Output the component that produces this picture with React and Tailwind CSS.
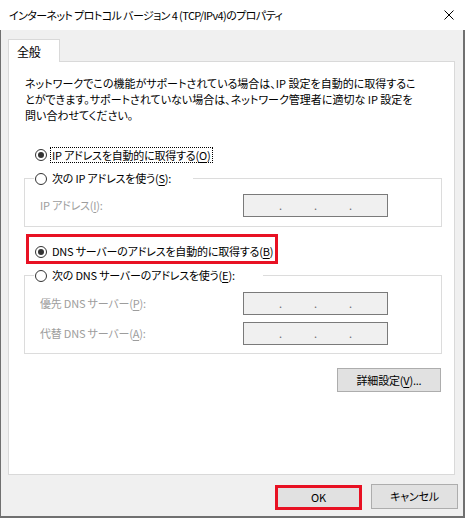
import React from 'react';

const Radio = ({ checked }) => (
  <span className="w-[12px] h-[12px] shrink-0 rounded-full border border-[#333333] bg-white flex items-center justify-center">
    {checked && <span className="w-[6px] h-[6px] rounded-full bg-[#333333]"></span>}
  </span>
);

const IpBox = () => (
  <div className="w-[145px] h-[23px] border border-[#7a7a7a] bg-[#f0f0f0] flex justify-center items-center text-[#6d6d6d] leading-none">
    <span className="w-[35px] text-center">.</span>
    <span className="w-[35px] text-center">.</span>
    <span className="w-[35px] text-center">.</span>
  </div>
);

const FieldRow = ({ children }) => (
  <div className="flex items-center">
    <span className="w-[218px] pl-[15px] text-[#9d9d9d] leading-[15px] whitespace-nowrap">{children}</span>
    <IpBox />
  </div>
);

const App = () => {
  return (
    <div className="w-[465px] h-[518px] bg-white text-[11px] tracking-[-0.2px] text-black font-['Noto_Sans_CJK_JP',sans-serif] [font-feature-settings:'palt']">
      {/* title bar */}
      <div className="h-[30px] flex items-center justify-between pl-[9px] pr-[11px]">
        <span className="leading-[15px] tracking-[-0.6px] whitespace-nowrap">インターネット プロトコル バージョン 4 (TCP/IPv4)のプロパティ</span>
        <svg width="10" height="10" viewBox="0 0 10 10">
          <path d="M0.5 0.5L9.5 9.5M9.5 0.5L0.5 9.5" stroke="#000" strokeWidth="1" fill="none" />
        </svg>
      </div>

      <div className="h-[488px] bg-[#f0f0f0] border-l border-r-2 border-b-2 border-[#707070] pt-[9px] pl-[7px] flex flex-col">
        <div className="w-[52px] h-[23px] -mb-px relative z-10 bg-white border border-b-0 border-[#d9d9d9] flex items-center pl-[8px] leading-[15px] text-[12px]">
          全般
        </div>

        <div className="w-[447px] h-[414px] border border-[#d9d9d9] bg-white flex flex-col">
          <p className="pl-[16px] pt-[13px] leading-[16px] tracking-normal whitespace-nowrap">
            ネットワークでこの機能がサポートされている場合は、IP 設定を自動的に取得するこ
            <br />
            とができます。サポートされていない場合は、ネットワーク管理者に適切な IP 設定を
            <br />
            問い合わせてください。
          </p>

          <div className="mt-[24px] pl-[26px] flex items-center h-[16px]">
            <Radio checked />
            <span className="ml-[3px] px-[1px] border border-dotted border-black leading-[14px] whitespace-nowrap">
              IP アドレスを自動的に取得する(<u className="underline-offset-2">O</u>)
            </span>
          </div>

          <fieldset className="mt-[8px] ml-[15px] w-[418px] border border-[#dcdcdc]">
            <legend className="ml-[9px] w-[159px] h-[15px] pl-[1px] flex items-center">
              <Radio />
              <span className="ml-[5px] leading-[15px] whitespace-nowrap">
                次の IP アドレスを使う(<u className="underline-offset-2">S</u>):
              </span>
            </legend>
            <div className="pt-[8px] pb-[9px]">
              <FieldRow>
                IP アドレス(<u className="underline-offset-2">I</u>):
              </FieldRow>
            </div>
          </fieldset>

          <div className="mt-[7px] ml-[17px] w-[252px] h-[30px] border-[3px] border-[#e81123] pl-[6px] pt-[7px]">
            <div className="flex items-center h-[15px]">
              <Radio checked />
              <span className="ml-[5px] leading-[15px] whitespace-nowrap">
                DNS サーバーのアドレスを自動的に取得する(<u className="underline-offset-2">B</u>)
              </span>
            </div>
          </div>

          <fieldset className="mt-[4px] ml-[15px] w-[418px] border border-[#dcdcdc]">
            <legend className="ml-[9px] w-[229px] h-[15px] pl-[1px] flex items-center">
              <Radio />
              <span className="ml-[5px] leading-[15px] whitespace-nowrap">
                次の DNS サーバーのアドレスを使う(<u className="underline-offset-2">E</u>):
              </span>
            </legend>
            <div className="pt-[9px] pb-[8px] flex flex-col gap-[7px]">
              <FieldRow>
                優先 DNS サーバー(<u className="underline-offset-2">P</u>):
              </FieldRow>
              <FieldRow>
                代替 DNS サーバー(<u className="underline-offset-2">A</u>):
              </FieldRow>
            </div>
          </fieldset>

          <button className="mt-[14px] mr-[13px] self-end w-[104px] h-[24px] bg-[#e1e1e1] border border-[#adadad] leading-[15px] whitespace-nowrap">
            詳細設定(<u className="underline-offset-2">V</u>)...
          </button>
        </div>

        <div className="mt-[9px] pr-[5px] flex justify-end items-start gap-[9px]">
          <button className="mt-[1px] w-[87px] h-[25px] bg-[#e1e1e1] border-[3px] border-[#e81123] leading-[15px]">
            OK
          </button>
          <button className="w-[87px] h-[25px] bg-[#e1e1e1] border border-[#adadad] leading-[15px]">
            キャンセル
          </button>
        </div>
      </div>
    </div>
  );
};

export default App;
